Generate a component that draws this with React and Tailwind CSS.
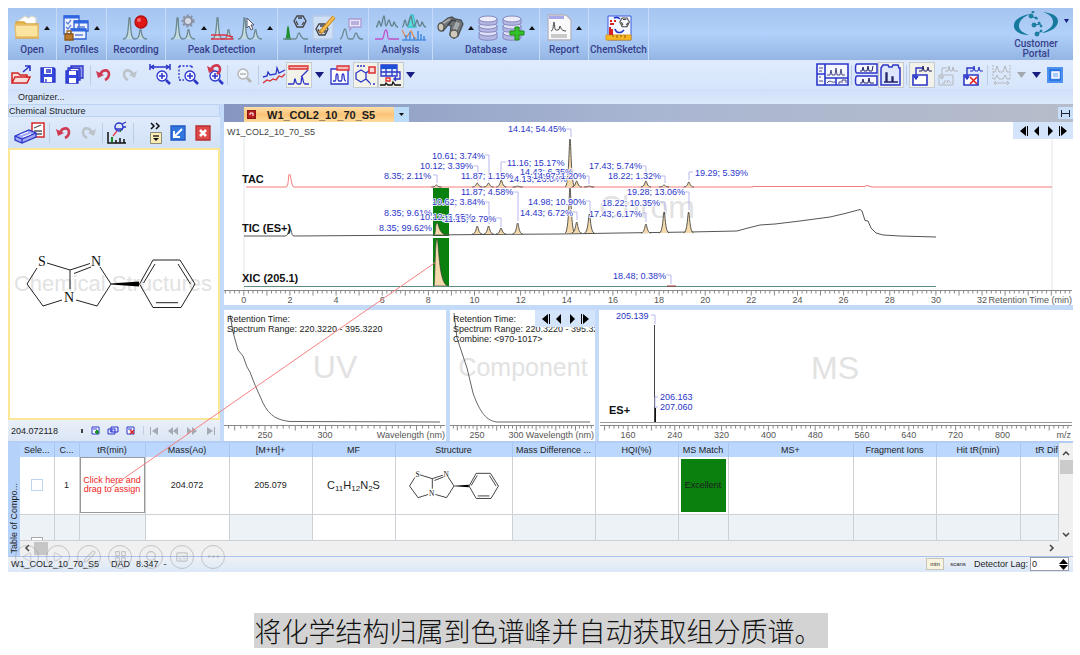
import React from 'react'
import { useState } from 'react'
import { Triangle, Pen, LayoutGrid, Search, Captions, Ellipsis } from 'lucide-react'

const INK = '#2b35c8'

// chromatogram scale: minutes to x
const tx = (t) => 243.8 + t * 23.07

const tacPeaks = [[8.35, 185], [10.12, 183], [10.61, 183], [11.16, 180], [11.87, 186], [14.14, 139], [14.43, 181], [14.97, 186], [17.43, 181], [18.22, 185], [19.29, 182]]
const ticPeaks = [[10.12, 226], [10.61, 226], [11.15, 228], [11.87, 223], [14.14, 188], [14.43, 222], [14.98, 214], [17.43, 224], [18.22, 212], [19.28, 212]]

const chromLabels = [
  ['14.13; 26.04%', 509, 182], ['14.43; 6.35%', 520, 175], ['14.97; 1.20%', 533, 179],
  ['14.14; 54.45%', 508, 132], ['10.61; 3.74%', 432, 159], ['10.12; 3.39%', 420, 169],
  ['8.35; 2.11%', 384, 179], ['11.87; 1.15%', 461, 179], ['11.16; 15.17%', 507, 166],
  ['17.43; 5.74%', 589, 169], ['18.22; 1.32%', 608, 179], ['19.29; 5.39%', 695, 176],
  ['11.87; 4.58%', 461, 195], ['10.62; 3.84%', 432, 205], ['8.35; 9.61%', 384, 216],
  ['10.12; 3.95%', 420, 220], ['11.15; 2.79%', 444, 222], ['8.35; 99.62%', 379, 231],
  ['14.98; 10.90%', 528, 205], ['14.43; 6.72%', 520, 216], ['17.43; 6.17%', 589, 217],
  ['18.22; 10.35%', 602, 206], ['19.28; 13.06%', 627, 195], ['18.48; 0.38%', 613, 279],
]

const leaders = [
  'M566 129h5v8', 'M485 155h4v26', 'M473 166h5v15', 'M433 175h4v8', 'M506 162h-5v16', 'M642 166h4v13',
  'M660 176h5v7', 'M693 172h-4v8', 'M584 176h5v8', 'M513 192h5v29', 'M485 202h4v22', 'M496 218h5v9',
  'M585 201h5v12', 'M572 212h5v8', 'M642 213h4v9', 'M660 202h5v8', 'M684 192h5v18', 'M666 275h5v9',
]

const columns = [
  ['Sele...', 'w-[34px]', true], ['C...', 'w-[25px]', true], ['tR(min)', 'w-[66px]', true], ['Mass(Ao)', 'w-[84px]', false],
  ['[M+H]+', 'w-[83px]', true], ['MF', 'w-[83px]', false], ['Structure', 'w-[117px]', false], ['Mass Difference ...', 'w-[83px]', true],
  ['HQI(%)', 'w-[83px]', true], ['MS Match', 'w-[50px]', true], ['MS+', 'w-[125px]', true], ['Fragment Ions', 'w-[83px]', true],
  ['Hit tR(min)', 'w-[84px]', true], ['tR Dif', '', true],
]

const peakPath = (x, top, base) => `M${x - 5} ${base}C${x - 1} ${base} ${x - 1} ${top} ${x} ${top}C${x + 1} ${top} ${x + 1} ${base} ${x + 5} ${base}`

const Svg = ({ w, h, children }) => (
  <svg width={w} height={h} viewBox={`0 0 ${w} ${h}`} fill="none" stroke={INK} strokeWidth="1.3" className="shrink-0">{children}</svg>
)

const Peaks = ({ color = '#6d8a93' }) => (
  <path stroke={color} strokeWidth="1.3" fill="#c4dce0" d="M0 25c4 0 5-3 6-21h1c1 18 2 21 5 21 4 0 4-3 5-9h1c1 7 2 9 6 9" />
)

const Benzene = ({ color = '#444' }) => <path stroke={color} strokeWidth="1.3" d="M4 0h6l3 5-3 6H4L1 5zM5 2h4M3 5l2 4M11 6L9 9" />

// ---------- ribbon icons ----------
const FolderIcon = () => (
  <Svg w={26} h={28}>
    <path fill="#fff" stroke="#d5d5cf" d="M4 7l7-5 3 2 4-2 4 2v8H4z" />
    <path fill="#e9ba4d" stroke="#d8a640" d="M2 8h8l2 2h12v14H2z" />
    <path fill="#fbe3a0" stroke="#e6bd68" d="M1 11h23v12H2z" />
  </Svg>
)
const ProfilesIcon = () => (
  <Svg w={27} h={28}>
    <g stroke="#2f5fd0" fill="#eef4ff">
      <path d="M1 2h15v18H1zM11 7h14v10H11z" /><path d="M8 15h15v10H8z" />
    </g>
    <path stroke="#2f66e2" strokeWidth="3" d="M1 3h15M11 8h14M8 16h15" />
    <path stroke="#5c7ed8" d="M3 8l2 2 3-4M3 13l2 2 3-4M14 13h8M12 21h8" />
    <path stroke="#a06b21" d="M4 20v-3h4v3" /><path fill="#bd7a2b" stroke="#8c5a1e" d="M2 20h8v6H2z" />
  </Svg>
)
const RecordIcon = () => <Svg w={26} h={28}><Peaks /><circle cx="18" cy="8" r="6" fill="#e01717" stroke="#b01010" /><circle cx="16" cy="6" r="2" fill="#f46a6a" stroke="none" /></Svg>
const GearPeaks = () => <Svg w={26} h={28}><Peaks /><circle cx="17" cy="7" r="4" fill="#d5dae4" stroke="#8a91a5" strokeWidth="2" /><circle cx="17" cy="7" r="5.5" stroke="#8a91a5" strokeWidth="2" strokeDasharray="2 2" /></Svg>
const BaselinePeaks = () => <Svg w={23} h={28}><Peaks /><path stroke="#e03545" strokeWidth="1.5" d="M0 21h14l8 2M0 25h22" /></Svg>
const CursorPeaks = () => <Svg w={25} h={28}><Peaks /><path fill="#fff" stroke="#556" strokeWidth="1" d="M9 4v10l2-2 2 4 2-1-2-4h3z" /></Svg>
const AssignIcon = () => (
  <Svg w={25} h={28}>
    <path fill="#1c9b2e" stroke="#1c8a2b" d="M2 25c3 0 2-10 3-12 1 2 1 12 3 12z" />
    <path stroke="#6d8a93" d="M0 25h12c3 0 2-6 4-6s1 6 6 6h3" />
    <g transform="translate(10 2)"><Benzene /></g>
  </Svg>
)
const PencilIcon = () => (
  <Svg w={24} h={28}>
    <path fill="#cfdff5" stroke="#b8cbe6" d="M1 2h20v23H1z" />
    <g transform="translate(3 10)"><Benzene /></g>
    <path stroke="#c5801e" strokeWidth="4" d="M8 19L22 3" /><path stroke="#f7c250" strokeWidth="2" d="M9 18L22 3" />
  </Svg>
)
const NotePeaks = () => <Svg w={23} h={28}><path stroke="#6d8a93" d="M0 25c3 0 3-10 5-10s1 10 4 10h3c3 0 2-6 4-6s1 6 5 6h2" /><path fill="#ece8fb" stroke="#a99bd2" d="M9 5h12v8h-9l-2 3v-3H9zM11 8h8M11 10h8" /></Svg>
const AnalysisIcon = () => (
  <Svg w={52} h={28}>
    <path stroke="#63828c" d="M1 13c2 0 2-6 3-6s1 5 2 5 2-10 3-10 1 10 2 10 2-6 3-6 1 6 3 6 1-4 2-4 1 5 4 5" />
    <path fill="#5fdce0" stroke="#39c3c9" d="M33 13l3-12h2l3 12z" />
    <path stroke="#63828c" d="M27 13c2 0 2-7 3-7s1 6 2 6 3-10 4-10 1 10 3 10 2-6 3-6 1 6 3 6 1-4 2-4 1 5 4 5" />
    <path stroke="#c052c8" d="M0 25h7c2 0 2-9 4-9s1 9 3 9h10" />
    <path stroke="#e28850" d="M27 16l4 8 5-7 3 6 3 3" /><path stroke="#4b8fe0" strokeWidth="1.6" d="M27 26h24M31 26v-5M35 26v-8M39 26v-3M43 26v-9M46 26v-6M49 26v-4" />
  </Svg>
)
const BinocularsIcon = () => (
  <Svg w={27} h={28}>
    <path fill="#6f7478" stroke="#4d5154" d="M2 11L11 4l4-1 3 2 6 1 2 4-5 12-4 2-4-3 1-9-3-1-5 6-4-1z" />
    <path stroke="#a9adaf" strokeWidth="2" d="M5 10l8-5M16 17l4-9M22 9l-4 9" />
    <path stroke="#3e4143" strokeWidth="1.500" d="M11 11l4-5 4 1" />
    <ellipse cx="4" cy="13" rx="3" ry="4" fill="#cfcabb" stroke="#555" /><ellipse cx="17" cy="20" rx="4" ry="4" fill="#cfcabb" stroke="#555" />
  </Svg>
)
const Disks = () => (
  <g stroke="#8488c0" strokeWidth="1">
    <path fill="#b4b7e2" d="M1 19v5c0 3 18 3 18 0v-5z" /><ellipse cx="10" cy="19" rx="9" ry="3" fill="#dfe0f6" />
    <path fill="#b4b7e2" d="M1 12v4c0 3 18 3 18 0v-4z" /><ellipse cx="10" cy="12" rx="9" ry="3" fill="#dfe0f6" />
    <path fill="#b4b7e2" d="M1 5v4c0 3 18 3 18 0V5z" /><ellipse cx="10" cy="5" rx="9" ry="3" fill="#ececfa" />
  </g>
)
const DbIcon = () => <Svg w={20} h={28}><Disks /></Svg>
const DbAddIcon = () => <Svg w={23} h={28}><Disks /><path fill="#35c229" stroke="#1f8a18" strokeWidth="1" d="M13 13h4v4h5v4h-5v5h-4v-5H8v-4h5z" /></Svg>
const ReportIcon = () => (
  <Svg w={25} h={28}>
    <path fill="#fafafa" stroke="#b3b3c2" d="M1 1h18l5 5v20H1z" /><path fill="#a9a8ea" stroke="none" d="M2 2h15v3H2z" />
    <path stroke="#444" strokeWidth="1" d="M4 17c3 0 2-9 3-9s0 8 2 8h2c2 0 1-4 2-4s0 5 6 5" /><path stroke="#bbb" d="M4 21h16M4 23h16" />
  </Svg>
)
const SketchIcon = () => (
  <Svg w={27} h={28}>
    <path fill="#f5f7ff" stroke="#3a5ae0" strokeWidth="1" d="M3 2h23v24H3z" /><path fill="#f5b623" stroke="#e09a20" strokeWidth="1" d="M1 21h25v5H1z" /><path stroke="#8a5a00" strokeWidth="1" d="M8 21v2M12 21v3M16 21v2M20 21v3" />
    <path stroke="#d62222" strokeWidth="2" d="M5 21v-8M7 21v-6M5 7h2M9 7h2M5 10h4" />
    <path stroke="#2239d0" strokeWidth="1.6" d="M9 4c2-1 4-1 6 1M10 15c1 4 6 5 9 1" />
    <g transform="translate(14 4) scale(.8)"><Benzene /></g>
  </Svg>
)
const PortalLogo = () => (
  <Svg w={46} h={28}>
    <path fill="#17799e" stroke="none" d="M17 3C6 5 0 10 1 16c1 5 7 8 15 8-5-2-10-4-10-9C6 10 10 6 17 3zM30 1c9 1 15 4 15 9 0 6-7 11-16 12 6-3 11-6 11-11 0-5-4-8-10-10z" />
    <g fill="#1b86a0" stroke="#17799e" strokeWidth="1">
      <circle cx="18" cy="5" r="2" /><circle cx="23" cy="7" r="1" /><circle cx="20" cy="1" r="1" /><circle cx="21" cy="14" r="2" /><circle cx="26" cy="12" r="1" /><circle cx="28" cy="15" r="1" /><circle cx="24" cy="23" r="2" /><circle cx="28" cy="20" r="1" />
      <path d="M18 5l7 3M21 14l7-1M24 23l4-3" />
    </g>
  </Svg>
)

// ---------- toolbar icons ----------
const Mag = ({ c = INK, sign = 'M10 13h6M13 10v6' }) => <><circle cx="13" cy="13" r="5" stroke={c} fill="#f4f8ff" /><path stroke={c} strokeWidth="1.5" d={sign} /><path stroke={c} strokeWidth="2.5" d="M17 17l4 4" /></>
const Undo = ({ color = '#d03a50' }) => <Svg w={15} h={15}><path stroke={color} strokeWidth="2.6" d="M4 8c2-6 9-6 9-1 0 4-2 5-4 6" /><path fill={color} stroke="none" d="M0 4l2 7 6-3z" /></Svg>
const Redo = () => <Svg w={15} h={15}><path stroke="#bcc3c9" strokeWidth="2.6" d="M11 8C9 2 2 2 2 7c0 4 2 5 4 6" /><path fill="#bcc3c9" stroke="none" d="M15 4l-2 7-6-3z" /></Svg>
const OpenIcon = () => <Svg w={22} h={20}><path fill="#f8dedb" stroke="#cf2525" strokeWidth="1.5" d="M1 18V8h6l2 2h7v3M1 18l3-6h15l-3 6z" /><path strokeWidth="1.6" d="M12 7l7-6M14 1h5v5" /></Svg>
const SaveIcon = () => <Svg w={16} h={16}><path fill="#3448dc" d="M1 1h13l1 1v13H1z" /><path fill="#fff" stroke="none" d="M4 1h8v6H4zM4 10h8v5H4z" /><path d="M6 3h5M6 5h5M6 12v3" /></Svg>
const SaveAllIcon = () => <Svg w={19} h={19}><path fill="#8f9bee" d="M6 1h12v12H6z" /><path fill="#fff" stroke="none" d="M8 2h8v3H8z" /><path fill="#6573e6" d="M3 3h12v12H3z" /><path fill="#fff" stroke="none" d="M6 4h7v2H6z" /><path fill="#3448dc" d="M1 6h12v12H1z" /><path fill="#fff" stroke="none" d="M4 6h7v4H4zM4 13h7v5H4z" /></Svg>
const ZoomWidth = () => <Svg w={22} h={23}><path strokeWidth="1.5" d="M1 1v6M21 1v6M2 4h18M5 2L2 4l3 2M17 2l3 2-3 2" /><Mag /></Svg>
const ZoomArea = () => <Svg w={22} h={23}><path strokeDasharray="2 1.5" d="M2 3h13M2 3v14h5M15 3v3" /><Mag /></Svg>
const ZoomUndo = () => <Svg w={22} h={23}><Mag /><path stroke="#d03a50" strokeWidth="2.6" d="M9 7c2-6 9-6 9-1 0 4-2 4-3 5" /><path fill="#d03a50" stroke="none" d="M5 3l2 7 6-3z" /></Svg>
const ZoomOut = () => <Svg w={22} h={23}><g transform="translate(-2 -2)"><Mag c="#b3b3b0" sign="M10 13h6" /></g></Svg>
const Stack = () => <Svg w={24} h={20}><path d="M1 12l4-1 1-4 2 3 6-1 1-6 2 5 6-3" /><path stroke="#d93030" d="M1 18l4-3 3 1 3-2 3 1 3-4 3 1 3-3" /></Svg>
const LabelPeak = () => <Svg w={24} h={22}><path fill="#f7b6b6" stroke="#d93030" d="M2 2h19v3H2z" /><path d="M21 6l-7 7M1 20h5c2 0 1-5 2-5s0 5 3 5h2c2 0 1-7 2-7s1 7 3 7h4" /></Svg>
const TagPeak = () => <Svg w={20} h={20}><path fill="#fff" d="M1 4h17v15H1z" /><path fill="#f7b6b6" stroke="#d93030" d="M7 1h12v4H7z" /><path d="M3 16h2c2 0 0-7 2-7s0 7 2 7h2c2 0 0-7 2-7s0 7 3 7" /></Svg>
const RingTag = () => <Svg w={22} h={22}><path strokeDasharray="2 1" d="M2 2h8" /><path d="M6 6l5 3v6l-5 3-5-3V9zM11 9l4-3M11 15l4 4" /><path fill="#fbd9d9" stroke="#d93030" strokeWidth="1.5" d="M14 3h6v6h-6z" /><path d="M15 20h1M18 20h2" /></Svg>
const TableTag = () => <Svg w={22} h={22}><path fill="#dff1ff" d="M1 1h16v11H1zM1 8h16M6 4v8M12 4v8" /><path stroke="#1d50d8" strokeWidth="4" d="M1 3h16" /><path d="M17 8h3v7h-6M16 13l-2 2 2 2" /><path stroke="#d93030" d="M6 14h4v3H6z" /><path stroke="#111" d="M0 21h5l1-2 2 2h4l1-3 2 3h6" /></Svg>
const Down = ({ color = '#171c80' }) => <Svg w={9} h={6}><path fill={color} stroke="none" d="M0 0h9L4.500 6z" /></Svg>
const LayoutA = () => <Svg w={33} h={23}><path fill="#f4f7ff" strokeWidth="1.6" d="M1 1h31v21H1zM9 1v21M9 15h23M20 15v7M1 11h8" /><path stroke="#4a4a80" strokeWidth="1" d="M3 5h4M3 8h3M3 14h2M3 18h4M11 12h3l1-5 1 5h3l1-7 1 7h3l1-6 1 6h3M11 20c3-4 4 0 8-1M22 20h2v-2M26 20v-3h4v3" /></Svg>
const LayoutB = () => <Svg w={24} h={23}><path fill="#f4f7ff" strokeWidth="1.5" d="M3 1h20v9H3c-2 0-2-9 0-9zM3 13h20v9H3c-2 0-2-9 0-9z" /><path stroke="#222266" strokeWidth="1" d="M6 8h2l1-4 1 4h3l1-5 1 5h3l1-5M6 20h2l1-4 1 4h4l1-5 1 5h4" /></Svg>
const LayoutC = () => <Svg w={22} h={22}><path fill="#dde5ff" strokeWidth="1.5" d="M1 4l2-3h5l1 2h3l1-2h5l1 3h1v17H1z" /><path stroke="#222266" d="M4 18h2V9h1v9h5v-5h1v5h5" /></Svg>
const Copy1 = () => <Svg w={22} h={22}><path fill="#fff" strokeWidth="1.6" d="M2 11h14v10H2z" /><path strokeWidth="1.4" d="M5 15V4h6M3 12l2 3 2-3" /><path stroke="#222266" strokeWidth="1" d="M8 7h3l1-5 1 5h3l1-4 1 4h3" /></Svg>
const Copy2 = () => <Svg w={22} h={22}><g stroke="#b5b7bb"><path strokeWidth="1" d="M2 11h14v10H2zM5 15V4h5M3 12l2 3 2-3M8 7h3l1-5 1 5h2l1-4 1 4h4M5 19h3v-3M10 19l1-3 3 3" /></g></Svg>
const Copy3 = () => <Svg w={22} h={22}><path fill="#fff" strokeWidth="1.6" d="M2 11h14v10H2z" /><path strokeWidth="1.4" d="M5 15V4h6M3 12l2 3 2-3" /><path strokeWidth="1" d="M8 7h3l1-5 1 5h3l1-4 1 4h3" /><path stroke="#e02020" strokeWidth="1.6" d="M8 13l7 7M15 13l-7 7" /></Svg>
const GreyPeaks = () => <Svg w={19} h={22}><g stroke="#b5b7bb"><path strokeWidth="1" d="M1 8h2l2-6 2 6h4l2-6 2 6h3M1 15h2l2-4 2 4h4l2-4 2 4h3M2 19h15M4 17l-2 2 2 2M15 17l2 2-2 2" /><path strokeWidth="1" strokeDasharray="2 1" d="M1 1v14M18 1v14" /></g></Svg>
const MaxIcon = () => <Svg w={16} h={16}><path fill="#2d77e4" stroke="#4e91ee" strokeWidth="2" d="M1 1h14v14H1z" /><path fill="#a9cbfb" stroke="#fff" strokeWidth="1.500" d="M5 5h7v6H5z" /></Svg>

// the molecule, shared by the sketch pane and the table cell
const Molecule = ({ bond = 1 }) => (
  <g fill="none" stroke="#222" strokeWidth={bond}>
    <path d="M47 263L70 270L70 289M70 270L90 263.500M74 273.500L91 267M100 267L111 284L97 306L76 300M62 300L43 306L27 284L37 268" />
    <path fill="#000" stroke="none" d="M111 283.500l28-2v5l-28-2z" />
    <path d="M139.500 284L153 260H180L195 284L181 307.500H153ZM143.500 283L155 264M178 264L190.500 284M156 302.700H178" />
    <g fill="#111" stroke="none" fontSize="14" textAnchor="middle" className="font-['Liberation_Serif',serif]">
      <text x="42" y="266">S</text><text x="96" y="266">N</text><text x="69" y="302">N</text>
    </g>
  </g>
)

const Tool = ({ label, width, on, children }) => (
  <button aria-label={label} className={`flex h-[26px] shrink-0 items-center justify-center ${width} ${on ? 'border border-[#c3cbd5] bg-[#f3f2e8]' : ''}`}>{children}</button>
)
const Sep = () => <div className="mx-[2px] h-5 w-px shrink-0 bg-[#bccde8]"></div>
const Caret = () => <svg width="6" height="4" viewBox="0 0 6 4" className="shrink-0"><path d="M3 0l3 4H0z" fill="#111" /></svg>

const Group = ({ name, width, icons }) => (
  <div className={`flex shrink-0 flex-col items-center border-r border-[#c5dbf8] pt-1 ${width}`}>
    <div className="flex h-8 items-center gap-1">
      {icons.map((icon, i) => icon === 'caret' ? <Caret key={i} /> : <button key={i} aria-label={name}>{icon}</button>)}
    </div>
    <span className="text-[10px] leading-3 whitespace-nowrap">{name}</span>
  </div>
)

const NavArrows = () => (
  <div className="absolute top-0 right-0 flex h-[17px] w-[60px] items-center justify-around bg-[#d3e4fb] px-1">
    {['M7 0v10L1 5zM8 0h1v10H8z', 'M7 0v10L2 5z', 'M3 0v10l5-5z', 'M1 0h1v10H1zM3 0v10l6-5z'].map((d, i) => (
      <button key={d} aria-label={['First', 'Previous', 'Next', 'Last'][i]}><svg width="10" height="10"><path d={d} fill="#000" /></svg></button>
    ))}
  </div>
)

const Axis = ({ from, to, y, origin, step, every }) => {
  const ticks = []
  const first = Math.ceil((from - origin) / step)
  for (let i = first; origin + i * step < to; i++) {
    ticks.push(`M${(origin + i * step).toFixed(1)} ${y}v${i % every === 0 ? 5 : 3}`)
  }
  return <path d={`M${from} ${y}H${to}` + ticks.join('')} stroke="#888" fill="none" strokeWidth="1" />
}

const Chromatogram = () => (
  <svg viewBox="224 122 849 183" className="block h-auto w-full bg-white text-[9px]">
    <path d="M244 136V290M1052 136V290" stroke="#e3e6ea" />
    <text x="647" y="218" fontSize="32" textAnchor="middle" fill="#e2e2e2">Chrom</text>
    <path fill="#0a810f" d="M433 188h16v48h-16zM433 238h16v49h-16z" />
    <path d="M246 187H286C289 187 288 174 289.500 174S291 187 294 187H753V186.500H864L867 185.500L872 187H1052" stroke="#f47c7c" fill="none" />
    {tacPeaks.map(([t, top]) => <path key={t} d={peakPath(tx(t), top, 187)} fill="#f3d9ab" stroke="#333" strokeWidth=".8" />)}
    <path d="M244 236H285C289 236 288 229 290 229S291 236 294 236L433 235L480 234.500L560 234L620 233L690 232L737 231L748 228L760 225L775 224L800 221L815 219L830 217L845 213.500L860 209.500L862 211L865 220.500L868 221L871 228L876 233L883 235L900 236L936 237" stroke="#555" fill="none" />
    {ticPeaks.map(([t, top]) => <path key={t} d={peakPath(tx(t), top, 234 - (t > 13 ? 1 : 0))} fill="#f3d9ab" stroke="#333" strokeWidth=".8" />)}
    <path d="M434 235C436 234 435 223 437 223S438 233 446 235Z" fill="#f3d9ab" stroke="#333" strokeWidth=".6" />
    <path d="M434 286C435 284 435 239 437 239S438 284 448 286Z" fill="#f3d9ab" stroke="#333" strokeWidth=".6" />
    <path d="M244 286.500H936" stroke="#5e8c86" />
    <path d="M667 286h9" stroke="#a33" />
    <path d={leaders.join('')} stroke="#b9b9ee" fill="none" />
    <g fill={INK} stroke="#fff" strokeWidth="1.500" className="[paint-order:stroke]">
      {chromLabels.map(([label, x, y]) => <text key={label} x={x} y={y}>{label}</text>)}
    </g>
    <g fontSize="11" fontWeight="700" fill="#111">
      <text x="242" y="183">TAC</text><text x="242" y="232">TIC (ES+)</text><text x="242" y="282">XIC (205.1)</text>
    </g>
    <text x="227" y="135" fill="#444">W1_COL2_10_70_S5</text>
    <Axis from={224} to={1072} y={290.5} origin={243.8} step={4.614} every={5} />
    <g fill="#555" textAnchor="middle">
      {Array.from({ length: 17 }, (_, i) => <text key={i} x={tx(i * 2)} y="303">{i * 2}</text>)}
      <text x="1072" y="303" textAnchor="end">Retention Time (min)</text>
    </g>
  </svg>
)

const UvSpectrum = () => (
  <svg viewBox="224 310 222 131" className="block h-auto w-full bg-white text-[9px]">
    <text x="335" y="378" fontSize="32" textAnchor="middle" fill="#e2e2e2">UV</text>
    <path d="M230 315L233 332L238 350L243 356L247 367L250 372L255 385L263 403C270 417 278 420 290 421.500L440 422" stroke="#666" fill="none" />
    <g fill="#222"><text x="227" y="322">Retention Time:</text><text x="227" y="332">Spectrum Range: 220.3220 - 395.3220</text></g>
    <Axis from={224} to={445} y={425.5} origin={265} step={6.06} every={5} />
    <g fill="#555" textAnchor="middle"><text x="265" y="438">250</text><text x="325" y="438">300</text><text x="445" y="438" textAnchor="end">Wavelength (nm)</text></g>
  </svg>
)

const ComponentSpectrum = () => (
  <svg viewBox="450 310 145 131" className="block h-auto w-full bg-white text-[9px]">
    <text x="523" y="376" fontSize="25" textAnchor="middle" fill="#e2e2e2">Component</text>
    <path d="M454 313L457 338L467 368L473 393C480 413 487 421 497 422H590" stroke="#666" fill="none" />
    <g fill="#222"><text x="453" y="322">Retention Time:</text><text x="453" y="332">Spectrum Range: 220.3220 - 395.32</text><text x="453" y="342">Combine: &lt;970-1017&gt;</text></g>
    <Axis from={450} to={594} y={425.5} origin={477} step={3.94} every={5} />
    <g fill="#555" textAnchor="middle"><text x="477" y="438">250</text><text x="516" y="438">300</text><text x="594" y="438" textAnchor="end">Wavelength (nm)</text></g>
  </svg>
)

const MassSpectrum = () => (
  <svg viewBox="599 310 474 131" className="block h-auto w-full bg-white text-[9px]">
    <text x="835" y="379" fontSize="32" textAnchor="middle" fill="#e2e2e2">MS</text>
    <path d="M654.500 325V422" stroke="#444" /><path d="M655.500 408V422" stroke="#111" />
    <path d="M600 422.500H1072" stroke="#999" />
    <path d="M651 315h4v9M658 397h-3v10M658 407h-3" stroke="#b9b9ee" fill="none" />
    <g fill={INK}><text x="616" y="319">205.139</text><text x="660" y="400">206.163</text><text x="660" y="410">207.060</text></g>
    <text x="609" y="414" fontSize="11" fontWeight="700" fill="#111">ES+</text>
    <Axis from={600} to={1072} y={425.5} origin={628} step={4.68} every={5} />
    <g fill="#555" textAnchor="middle">
      {Array.from({ length: 9 }, (_, i) => <text key={i} x={628 + i * 46.8} y="438">{160 + i * 80}</text>)}
      <text x="1071" y="438" textAnchor="end">m/z</text>
    </g>
  </svg>
)

const Ribbon = () => (
  <header className="flex h-[52px] bg-linear-to-b from-[#a5c4ef] via-[#b1d1fb] to-[#94b5e3] font-[Roboto,sans-serif] font-medium text-[#37418c]">
    <Group name="Open" width="w-[49px]" icons={[<FolderIcon />, 'caret']} />
    <Group name="Profiles" width="w-[50px]" icons={[<ProfilesIcon />, 'caret']} />
    <Group name="Recording" width="w-[59px]" icons={[<RecordIcon />]} />
    <Group name="Peak Detection" width="w-[112px]" icons={[<GearPeaks />, 'caret', <BaselinePeaks />, <CursorPeaks />, 'caret']} />
    <Group name="Interpret" width="w-[91px]" icons={[<AssignIcon />, <PencilIcon />, <NotePeaks />]} />
    <Group name="Analysis" width="w-[64px]" icons={[<AnalysisIcon />]} />
    <Group name="Database" width="w-[107px]" icons={[<BinocularsIcon />, 'caret', <DbIcon />, <DbAddIcon />, 'caret']} />
    <Group name="Report" width="w-[49px]" icons={[<ReportIcon />, 'caret']} />
    <Group name="ChemSketch" width="w-[60px]" icons={[<SketchIcon />]} />
    <div className="ml-auto flex items-start pt-[3px] pr-1">
      <button className="flex w-[56px] flex-col items-center text-[10px] leading-[10px]">
        <PortalLogo />
        <span>Customer Portal</span>
      </button>
      <div className="pt-2"><Svg w={5} h={4}><path fill="#171c80" stroke="none" d="M0 0h5L2.500 4z" /></Svg></div>
    </div>
  </header>
)

const Toolbar = () => (
  <div className="flex h-[29px] items-center justify-between bg-linear-to-b from-[#dfebfd] to-[#d6e5fb]">
    <div className="flex items-center">
      <Tool label="Open" width="w-[28px]"><OpenIcon /></Tool>
      <Tool label="Save" width="w-[24px]"><SaveIcon /></Tool>
      <Tool label="Save all" width="w-[28px]"><SaveAllIcon /></Tool>
      <Sep />
      <Tool label="Undo" width="w-[20px]"><Undo /></Tool>
      <Tool label="Redo" width="w-[32px]"><Redo /></Tool>
      <Tool label="Zoom width" width="w-[30px]"><ZoomWidth /></Tool>
      <Tool label="Zoom area" width="w-[25px]"><ZoomArea /></Tool>
      <Tool label="Undo zoom" width="w-[25px]"><ZoomUndo /></Tool>
      <Sep />
      <Tool label="Zoom out" width="w-[26px]"><ZoomOut /></Tool>
      <Sep />
      <Tool label="Stack traces" width="w-[25px]"><Stack /></Tool>
      <Tool label="Peak labels" width="w-[26px]" on><LabelPeak /></Tool>
      <Tool label="Label options" width="w-[14px]"><Down /></Tool>
      <Tool label="Peak tags" width="w-[27px]"><TagPeak /></Tool>
      <Tool label="Structures" width="w-[25px]" on><RingTag /></Tool>
      <Tool label="Peak table" width="w-[26px]" on><TableTag /></Tool>
      <Tool label="More" width="w-[13px]"><Down /></Tool>
    </div>
    <div className="flex items-center pr-[5px]">
      <Tool label="Tile panes" width="w-[33px]"><LayoutA /></Tool>
      <Sep />
      <Tool label="List panes" width="w-[24px]"><LayoutB /></Tool>
      <Tool label="Tab panes" width="w-[26px]" on><LayoutC /></Tool>
      <Sep />
      <Tool label="Add spectrum" width="w-[26px]" on><Copy1 /></Tool>
      <Tool label="Replace spectrum" width="w-[26px]"><Copy2 /></Tool>
      <Tool label="Remove spectrum" width="w-[24px]"><Copy3 /></Tool>
      <Sep />
      <Tool label="Align" width="w-[22px]"><GreyPeaks /></Tool>
      <Tool label="Align options" width="w-[18px]"><Down color="#a3a7ae" /></Tool>
      <Tool label="More" width="w-[12px]"><Down /></Tool>
      <Tool label="Maximize" width="w-[26px]"><MaxIcon /></Tool>
    </div>
  </div>
)

const StructurePane = () => (
  <aside className="flex w-[212px] shrink-0 flex-col">
    <h2 className="h-[13px] border border-[#bcd2f3] bg-[#d3e4fb] leading-[12px] whitespace-nowrap">Chemical Structure</h2>
    <div className="flex h-[31px] items-center bg-linear-to-b from-[#dfebfc] to-[#d2e1f6] px-1">
      <Tool label="Dictionary" width="w-[35px]">
        <Svg w={31} h={22}><path fill="#fff" stroke="#d22a2a" strokeWidth="1.5" d="M18 1h12v14H18z" /><path d="M20 6l7-3M20 9h8M20 12h8" stroke="#556" /><path fill="#a3a8f4" d="M1 14l14-6 7 3v4L8 21l-7-3z" /><path d="M1 14l7 3 14-6M8 17v4" /><path stroke="#fff" strokeWidth="1" d="M6 13l8-3M9 15l8-3" /></Svg>
      </Tool>
      <Sep />
      <Tool label="Undo" width="w-[22px]"><Undo /></Tool>
      <Tool label="Redo" width="w-[28px]"><Redo /></Tool>
      <div className="h-5 w-px bg-[#bccde8]"></div>
      <Tool label="Assign" width="w-[28px]">
        <Svg w={22} h={23}><circle cx="13" cy="6" r="4" strokeWidth="1.5" /><path d="M16 3l4-2M9 8h8M17 6h3" /><path stroke="#e04050" d="M11 10l-4 5" /><path stroke="#111" strokeWidth="1.5" d="M2 11v11h18M14 22v-5M18 22v-4M10 22v-3" /><path stroke="#158a20" strokeWidth="2" d="M6 21v-5M14 10h1" /></Svg>
      </Tool>
      <Sep />
      <button aria-label="More tools" className="ml-[10px] flex w-[22px] justify-center">
        <Svg w={12} h={23}><path stroke="#111" strokeWidth="1.5" d="M1 2l3 3-3 3M6 2l3 3-3 3" /><path fill="#fbecb5" stroke="#8d8d75" strokeWidth="1" d="M.5 11.500h11v11H.5z" /><path stroke="#111" d="M3 15h6" /><path fill="#111" stroke="none" d="M3 17h6l-3 3z" /></Svg>
      </button>
      <Tool label="Dock" width="w-[24px]"><Svg w={16} h={16}><path fill="#3277e0" stroke="#1f58c0" d="M1 1h14v14H1z" /><path stroke="#fff" strokeWidth="2" d="M12 4l-7 7M4 6v6h6" /></Svg></Tool>
      <Tool label="Close" width="w-[26px]"><Svg w={16} h={16}><path fill="#de4a4a" stroke="#b52e2e" d="M1 1h14v14H1z" /><path stroke="#fff" strokeWidth="2.500" d="M5 5l6 6M11 5l-6 6" /></Svg></Tool>
    </div>
    <div className="border-2 border-[#fbe798] bg-white">
      <svg viewBox="10 150 208 268" className="block h-auto w-full">
        <text x="113" y="291" fontSize="22" textAnchor="middle" fill="#e2e2e2">Chemical Structures</text>
        <Molecule />
      </svg>
    </div>
    <div className="flex flex-1 items-center bg-linear-to-b from-[#e9f0f9] to-[#dbe5f4] pl-[3px]">
      <span className="w-[70px]">204.072118</span>
      <span className="h-1 w-[2px] bg-[#444]"></span>
      <div className="flex flex-1 items-center justify-around border-r border-[#c0cfe4] px-1">
        <Svg w={9} h={9}><path fill="#fff" strokeWidth="1" d="M1 1h7v7H1zM2 3h4" /><path stroke="#18942a" strokeWidth="2" d="M4 6h4M6 4v4" /></Svg>
        <Svg w={12} h={9}><path fill="#dfe2ff" strokeWidth="1" d="M4 1h7v5H4zM1 3h7v5H1zM3 5h3" /></Svg>
        <Svg w={9} h={9}><path fill="#fff" strokeWidth="1" d="M1 1h7v7H1zM2 3h4" /><path stroke="#d22a2a" strokeWidth="1.600" d="M4 4l4 4M8 4L4 8" /></Svg>
      </div>
      <div className="flex w-[76px] items-center justify-around">
        {['M1 1h1v8H1zM9 1v8L3 5z', 'M5 1v8L0 5zM10 1v8L5 5z', 'M0 1v8l5-4zM5 1v8l5-4z', 'M8 1h1v8H8zM1 1v8l6-4z'].map((d, i) => (
          <button key={d} aria-label={['First', 'Back', 'Forward', 'Last'][i]}><svg width="10" height="10"><path d={d} fill="#a6abb3" /></svg></button>
        ))}
      </div>
    </div>
  </aside>
)

const ChartPanes = () => (
  <main className="min-w-0 flex-1">
    <div className="flex h-[18px] items-end bg-linear-to-r from-[#8796c0] via-[#a9b6d2] to-[#b6bcc9] pl-5">
      <button className="flex h-[15px] w-[150px] items-center bg-linear-to-b from-[#fde0a9] via-[#fbc479] to-[#fdda9c] pl-[3px] text-[11px] font-bold">
        <Svg w={9} h={9}><path fill="#c01f1f" stroke="#8c1414" d="M.5.5h8v8h-8z" /><path stroke="#fff" strokeWidth="1" d="M3 5V3h3v3" /></Svg>
        <span className="pl-[11px]">W1_COL2_10_70_S5</span>
      </button>
      <button aria-label="Tabs" className="flex h-[15px] w-[15px] items-center justify-center bg-[#bbdcf9]"><Svg w={5} h={3}><path fill="#111" stroke="none" d="M0 0h5L2.500 3z" /></Svg></button>
      <button aria-label="Fit width" className="mb-[3px] ml-auto flex h-3 w-[15px] items-center justify-center bg-[#c8dffb]"><Svg w={9} h={7}><path strokeWidth="1" stroke="#223" d="M.5 0v7M8.500 0v7M1 3.500h7" /></Svg></button>
    </div>
    <section className="relative">
      <Chromatogram />
      <NavArrows />
    </section>
    <div className="mt-[5px] flex gap-1">
      <section className="min-w-0 flex-[222]"><UvSpectrum /></section>
      <section className="relative min-w-0 flex-[145]"><ComponentSpectrum /><NavArrows /></section>
      <section className="min-w-0 flex-[474]"><MassSpectrum /></section>
    </div>
  </main>
)

const CompoundTable = () => {
  const [checked, setchecked] = useState(false)
  return (
    <section className="flex border-t-2 border-[#b3cdf5] bg-[#c5dbfb]">
      <h2 className="w-3 rotate-180 bg-[#b5d2fb] pt-[2px] text-[9px] leading-3 whitespace-nowrap [writing-mode:vertical-rl]">Table of Compo...</h2>
      <div className="min-w-0 flex-1">
        <div className="flex">
          <table className="w-full min-w-0 flex-1 table-fixed border-collapse bg-white text-center">
            <thead>
              <tr className="h-[14px] bg-[#bbd7fd]">
                {columns.map(([name, width]) => (
                  <th key={name} className={`overflow-hidden border-r border-[#a9c6ee] p-0 leading-[13px] font-normal whitespace-nowrap ${width} ${name === 'tR Dif' ? 'text-right' : ''}`}>{name}</th>
                ))}
              </tr>
            </thead>
            <tbody className="[&_td]:border-r [&_td]:border-b [&_td]:border-[#cdd1d5] [&_td]:p-0">
              <tr className="h-[57px]">
                <td><input type="checkbox" aria-label="Select compound 1" checked={checked} onChange={(e) => setchecked(e.target.checked)} className="block mx-auto size-3 appearance-none border border-[#bfd3f3] checked:bg-[#5a8be0]" /></td>
                <td>1</td>
                <td><button className="block h-[56px] w-full border border-[#999] leading-[9px] text-[#ee1c1c]">Click here and drag to assign</button></td>
                <td>204.072</td>
                <td>205.079</td>
                <td className="text-[11px] leading-4">C<sub className="text-[8px]">11</sub>H<sub className="text-[8px]">12</sub>N<sub className="text-[8px]">2</sub>S</td>
                <td><svg viewBox="24 252 174 62" width="92" height="33" className="mx-auto block"><Molecule bond={1.6} /></svg></td>
                <td></td>
                <td></td>
                <td><div className="mx-[2px] flex h-[53px] items-center justify-center bg-[#0a810f]">Excellent</div></td>
                <td></td><td></td><td></td><td></td>
              </tr>
              <tr className="h-[26px]">
                {columns.map(([name, , shaded], i) => (
                  <td key={name} className={shaded ? 'bg-[#edf2f6]' : ''}>
                    {i === 0 && <div className="h-[25px] overflow-hidden pt-[22px]"><input type="checkbox" aria-label="Select compound 2" className="mx-auto block size-3 appearance-none border border-[#aaa] bg-white" /></div>}
                  </td>
                ))}
              </tr>
            </tbody>
          </table>
          <div className="flex w-[14px] shrink-0 flex-col items-center bg-[#f0f0f0] pt-2 pb-1">
            <Svg w={8} h={5}><path stroke="#444" strokeWidth="1.500" d="M1 4l3-3 3 3" /></Svg>
            <div className="mt-1 h-[14px] w-[13px] bg-[#cbcbcb]"></div>
            <div className="mt-auto"><Svg w={8} h={5}><path stroke="#444" strokeWidth="1.500" d="M1 1l3 3 3-3" /></Svg></div>
          </div>
        </div>
        <div className="flex h-[15px] items-center bg-[#f0f0f0] pr-[18px] pl-1">
          <Svg w={6} h={8}><path stroke="#444" strokeWidth="1.500" d="M5 1L2 4l3 3" /></Svg>
          <div className="ml-1 h-[13px] w-[14px] bg-[#c6c6c6]"></div>
          <div className="ml-auto"><Svg w={6} h={8}><path stroke="#444" strokeWidth="1.500" d="M1 1l3 3-3 3" /></Svg></div>
        </div>
      </div>
    </section>
  )
}

const StatusBar = () => {
  const [lag, setlag] = useState(0)
  return (
    <footer className="flex h-4 items-center border-t border-[#a9c3ea] bg-linear-to-b from-[#eef1f5] to-[#dce8f8] pl-[3px] pr-1">
      <span className="pr-3">W1_COL2_10_70_S5</span>
      <span className="pr-[6px]">DAD</span>
      <span>8.347 &nbsp;-</span>
      <button className="ml-auto h-3 w-[18px] border border-[#c4c4b8] bg-[#f9f4df] text-[6px] leading-[9px]">min</button>
      <button className="w-7 text-[6px]">scans</button>
      <label htmlFor="lag" className="pr-[2px] pl-[2px]">Detector Lag:</label>
      <div className="flex h-[14px] items-center border border-[#9a9da5] bg-white">
        <input id="lag" value={lag} onChange={(e) => setlag(Number(e.target.value) || 0)} className="w-7 pl-[1px] outline-none" />
        <div className="flex flex-col gap-px">
          <button aria-label="Increase" onClick={() => setlag(lag + 1)}><svg width="9" height="5" className="block"><path d="M0 5h9L4.500 0z" /></svg></button>
          <button aria-label="Decrease" onClick={() => setlag(lag - 1)}><svg width="9" height="5" className="block"><path d="M0 0h9L4.500 5z" /></svg></button>
        </div>
      </div>
    </footer>
  )
}

const slideTools = [
  ['Previous slide', <Triangle size={10} className="-rotate-90" />], ['Next slide', <Triangle size={10} className="rotate-90" />], ['Pen', <Pen size={13} />],
  ['All slides', <LayoutGrid size={13} />], ['Magnify', <Search size={13} />], ['Subtitles', <Captions size={14} />], ['More', <Ellipsis size={15} />],
]

const App = () => {
  return (
    <div className="bg-white pt-2 pr-[7px] pb-1 pl-2 font-['Liberation_Sans',Arial,sans-serif] text-[9px] leading-3 text-[#1d1d1d]">
      <div className="relative">
        <Ribbon />
        <Toolbar />
        <div className="h-[15px] bg-linear-to-b from-[#d0e0f8] to-[#dce9fc] pl-[10px] leading-4">Organizer...</div>
        <div className="flex gap-1 bg-[#c3daf9]">
          <StructurePane />
          <ChartPanes />
        </div>
        <CompoundTable />
        <StatusBar />

        {/* drag arrow from the peak to the tR cell */}
        <svg viewBox="8 8 1065 563" className="pointer-events-none absolute inset-0 w-full">
          <path d="M436 262L110 488" stroke="#f58080" fill="none" />
        </svg>

        <div className="absolute bottom-[3px] left-[7px] flex gap-[7px] opacity-50">
          {slideTools.map(([name, icon]) => (
            <button key={name} aria-label={name} className="flex size-6 items-center justify-center rounded-full border border-[#999] text-[#999]">{icon}</button>
          ))}
        </div>
      </div>
      <p className="mx-auto mt-[41px] w-fit bg-[#d3d3d3] pr-[6px] pl-px font-['Noto_Sans_CJK_SC',sans-serif] text-[27px] leading-[35px] font-light text-[#111]">将化学结构归属到色谱峰并自动获取组分质谱。</p>
    </div>
  )
}

export default App
